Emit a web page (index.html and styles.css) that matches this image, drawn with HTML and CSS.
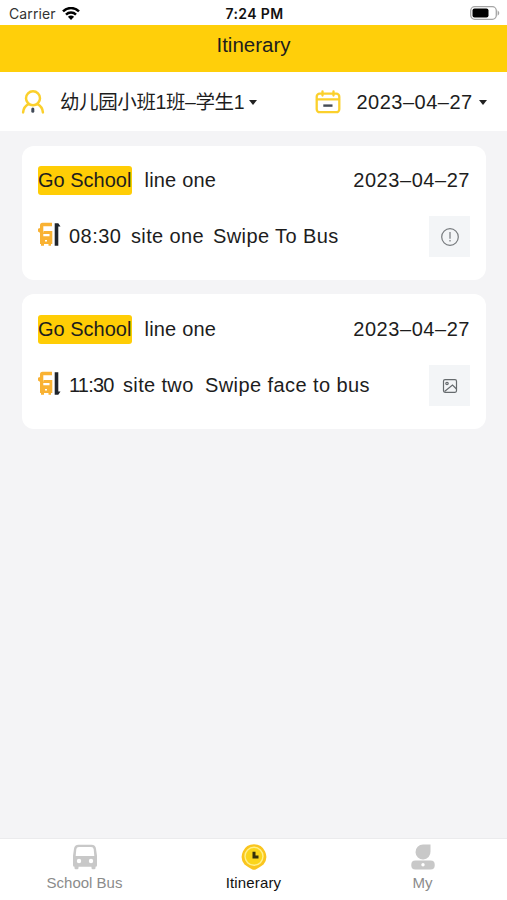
FILE: index.html
```html
<!DOCTYPE html>
<html lang="en">
<head>
<meta charset="utf-8">
<title>Itinerary</title>
<link rel="stylesheet" href="styles.css">
</head>
<body>
<div class="app">
  <div class="status">
    <div class="carrier"><span>Carrier</span>
      <svg width="18" height="14" viewBox="0 0 18 14"><g fill="none" stroke="#000" stroke-width="2.5"><path d="M1 4.300a11.500 11.500 0 0 1 16 0"/><path d="M4 7.600a7.200 7.200 0 0 1 10 0"/></g><path d="M5.900 9.800a4.600 4.600 0 0 1 6.200 0L9 13z"/></svg>
    </div>
    <div class="clock">7:24 PM</div>
    <svg class="battery" width="31" height="14" viewBox="0 0 31 14"><rect x="1.700" y=".7" width="25.600" height="12.600" rx="4" fill="#fff" stroke="#a5a5a5" stroke-width="1.300"/><rect x="3.500" y="2.500" width="16" height="9" rx="2"/><path d="M28.600 4.200q3.400 2.800 0 5.600z" fill="#a5a5a5"/></svg>
  </div>
  <header class="title">Itinerary</header>
  <div class="filters">
    <svg width="24" height="24" viewBox="0 0 24 24"><g fill="none" stroke="#fbd02c" stroke-width="2.500" stroke-linecap="round"><circle cx="12" cy="8.300" r="7"/><path d="M7.500 14.200Q2.500 16.800 2.100 22.400M16.500 14.200Q21.500 16.800 21.900 22.400"/></g><rect x="10.300" y="17.400" width="3" height="5.400" rx="1.500" fill="#414a58"/></svg>
    <span class="student">幼儿园小班1班–学生1</span>
    <i class="caret"></i>
    <svg class="calendar" width="26" height="24" viewBox="0 0 26 24"><g fill="none" stroke="#fbd02c" stroke-width="2.300" stroke-linecap="round"><rect x="1.700" y="3.700" width="22.600" height="18.500" rx="3"/><path d="M2 9.300h22M7.500 1.300v4.200M18.500 1.300v4.200"/></g><path d="M8.300 15.600h9.200" stroke="#454b55" stroke-width="2.400"/></svg>
    <span class="day">2023–04–27</span>
    <i class="caret"></i>
  </div>
  <main class="list">
    <section class="card">
      <div class="row">
        <span class="tag">Go School</span><span class="line">line one</span><span class="date">2023–04–27</span>
      </div>
      <div class="row detail">
        <svg class="stop" width="23" height="25" viewBox="0 0 23 25"><path d="M4.500 .8H14v3.400H5.300v7.300H3L0 9.500V6.800l2-.8V3.500Q2 .8 4.500.8z" fill="#f9b233"/><path d="M2 10.500h3.500V9h8.800v13h-1.300v1.800h-2.500V22H6v1.800H3V22H2z" fill="#f9b233"/><path d="M5.300 12h6.200v2.200H5.300zM7 18h2v1.500H7z" fill="#fff"/><path d="M16.700 23.800V1.200h3.600l2.200 3.400h-2.200v19.200z" fill="#20252d"/></svg>
        <span class="time">08:30</span><span class="site">site one</span><span class="action">Swipe To Bus</span>
        <div class="thumb"><svg width="20" height="20" viewBox="0 0 20 20" fill="none" stroke="#777b7e" stroke-width="1.200"><circle cx="10" cy="10" r="8.300"/><path d="M10 5v6.800M10 13v1.400"/></svg></div>
      </div>
    </section>
    <section class="card second">
      <div class="row">
        <span class="tag">Go School</span><span class="line">line one</span><span class="date">2023–04–27</span>
      </div>
      <div class="row detail">
        <svg class="stop" width="23" height="25" viewBox="0 0 23 25"><path d="M4.500 .8H14v3.400H5.300v7.300H3L0 9.500V6.800l2-.8V3.500Q2 .8 4.500.8z" fill="#f9b233"/><path d="M2 10.500h3.500V9h8.800v13h-1.300v1.800h-2.500V22H6v1.800H3V22H2z" fill="#f9b233"/><path d="M5.300 12h6.200v2.200H5.300zM7 18h2v1.500H7z" fill="#fff"/><path d="M16.700 1.200v22.600h3.600l2.200-3.400h-2.200V1.200z" fill="#20252d"/></svg>
        <span class="time narrow">11:30</span><span class="site">site two</span><span class="action long">Swipe face to bus</span>
        <div class="thumb"><svg width="16" height="16" viewBox="0 0 16 16" fill="none" stroke="#666b6e" stroke-width="1.200"><rect x="1.500" y="1.700" width="13" height="12.600" rx="1.500"/><circle cx="5" cy="5.500" r="1.200"/><path d="M2.500 13.500l8-6.500 4 4"/></svg></div>
      </div>
    </section>
  </main>
  <nav class="tabs">
    <div class="tab">
      <svg width="26" height="26" viewBox="0 0 26 26"><path d="M6.500.7h13q4 0 4.500 4l1 7v9.500q0 1.500-1.500 1.500v1.300q0 1.200-1.300 1.200h-1.500q-1.200 0-1.200-1.200v-1.300h-13V24q0 1.200-1.200 1.200H3.800q-1.300 0-1.300-1.200v-1.300q-1.500 0-1.500-1.500v-9.500l1-7q.5-4 4.500-4z" fill="#c8c8c8"/><path d="M7 3h12q2.500 0 2.700 2.300l.6 6.700H3.700l.6-6.700Q4.500 3 7 3z" fill="#fff"/><circle cx="7" cy="17" r="2.200" fill="#fff"/><circle cx="19" cy="17" r="2.200" fill="#fff"/></svg>
      <span>School Bus</span>
    </div>
    <div class="tab active">
      <svg width="26" height="26" viewBox="0 0 26 26"><path d="M13 .3a12.400 12.400 0 0 0-9.500 20.200Q7.500 23.500 11.300 25.400q1.700.8 3.400 0 3.800-1.900 7.800-4.900A12.400 12.400 0 0 0 13 .3z" fill="#fac51e"/><circle cx="13" cy="12.300" r="9" fill="#fbd51b" stroke="#fff08a" stroke-width="1.400"/><path d="M13 7.800v5.300h4.500" fill="none" stroke="#35300a" stroke-width="3"/></svg>
      <span>Itinerary</span>
    </div>
    <div class="tab">
      <svg width="26" height="26" viewBox="0 0 26 26"><path d="M13 .6h7.500v7A7.500 7.500 0 1 1 13 .6z" fill="#c8c8c8"/><rect x="1.300" y="16.500" width="23.400" height="9" rx="4" fill="#c8c8c8"/><circle cx="13" cy="20.800" r="1.700" fill="#fff"/></svg>
      <span>My</span>
    </div>
  </nav>
</div>
</body>
</html>
```
FILE: styles.css
```css
* { box-sizing: border-box; }
body {
  margin: 0;
  font-family: "Liberation Sans", "Noto Sans CJK SC", sans-serif;
  color: #1d1d1d;
}
svg { display: block; flex: none; }
.app { display: flex; flex-direction: column; width: 507px; height: 900px; background: #f4f4f6; }

.status {
  display: grid;
  grid-template-columns: 1fr auto 1fr;
  align-items: center;
  height: 25px;
  padding: 2px 7px 0 9px;
  background: #fff;
  font-family: Inter, sans-serif;
}
.carrier { display: flex; align-items: center; gap: 6px; font-size: 14px; letter-spacing: .1px; line-height: 16px; color: #333; }
.clock { font-size: 14px; font-weight: 600; letter-spacing: .4px; line-height: 16px; color: #111; }
.battery { justify-self: end; margin-top: -2px; }

.title {
  height: 47px;
  background: #ffcf0a;
  font-size: 20.5px;
  line-height: 40px;
  text-align: center;
}

.filters {
  display: flex;
  align-items: center;
  height: 59px;
  padding: 1px 20px 0 21px;
  background: #fff;
  font-size: 20px;
}
.student { width: 184px; margin-left: 15px; font-size: 19.5px; letter-spacing: -.4px; line-height: 28px; white-space: nowrap; }
.caret { margin-left: 5px; border: 4.5px solid transparent; border-top: 5px solid #222; border-bottom: 0; }
.calendar { margin-left: 58px; }
.day { margin-left: 15.5px; width: 117px; letter-spacing: .5px; white-space: nowrap; }

.list { display: flex; flex: 1; flex-direction: column; gap: 14px; padding: 15px 21px 0 22px; }
.card { height: 134px; padding: 20px 16px 0; border-radius: 12px; background: #fff; }
.card.second { height: 135px; padding-top: 21px; }
.row { display: flex; align-items: center; height: 29px; font-size: 20px; white-space: nowrap; }
.tag { width: 94px; height: 29px; line-height: 29px; border-radius: 3px; background: #ffcd05; }
.line { margin-left: 12.5px; letter-spacing: .2px; }
.date { margin-left: auto; letter-spacing: .55px; }
.detail { height: 41px; margin-top: 21px; }
.stop { margin-top: -5px; }
.time { width: 53px; margin-left: 8px; letter-spacing: .45px; }
.time.narrow { width: 45px; letter-spacing: -.8px; }
.site { width: 73px; margin-left: 9px; letter-spacing: .35px; }
.action { margin-left: 9px; letter-spacing: .4px; }
.action.long { letter-spacing: .42px; }
.thumb { display: flex; align-items: center; justify-content: center; width: 41px; height: 41px; margin-left: auto; background: #f3f5f7; }

.tabs { display: grid; grid-template-columns: 1fr 1fr 1fr; height: 62px; background: #fff; border-top: 1px solid #ebebed; }
.tab { display: flex; flex-direction: column; align-items: center; padding-top: 5px; color: #8b8b8b; font-size: 15px; line-height: 25px; }
.active { color: #111; letter-spacing: .15px; }
```
